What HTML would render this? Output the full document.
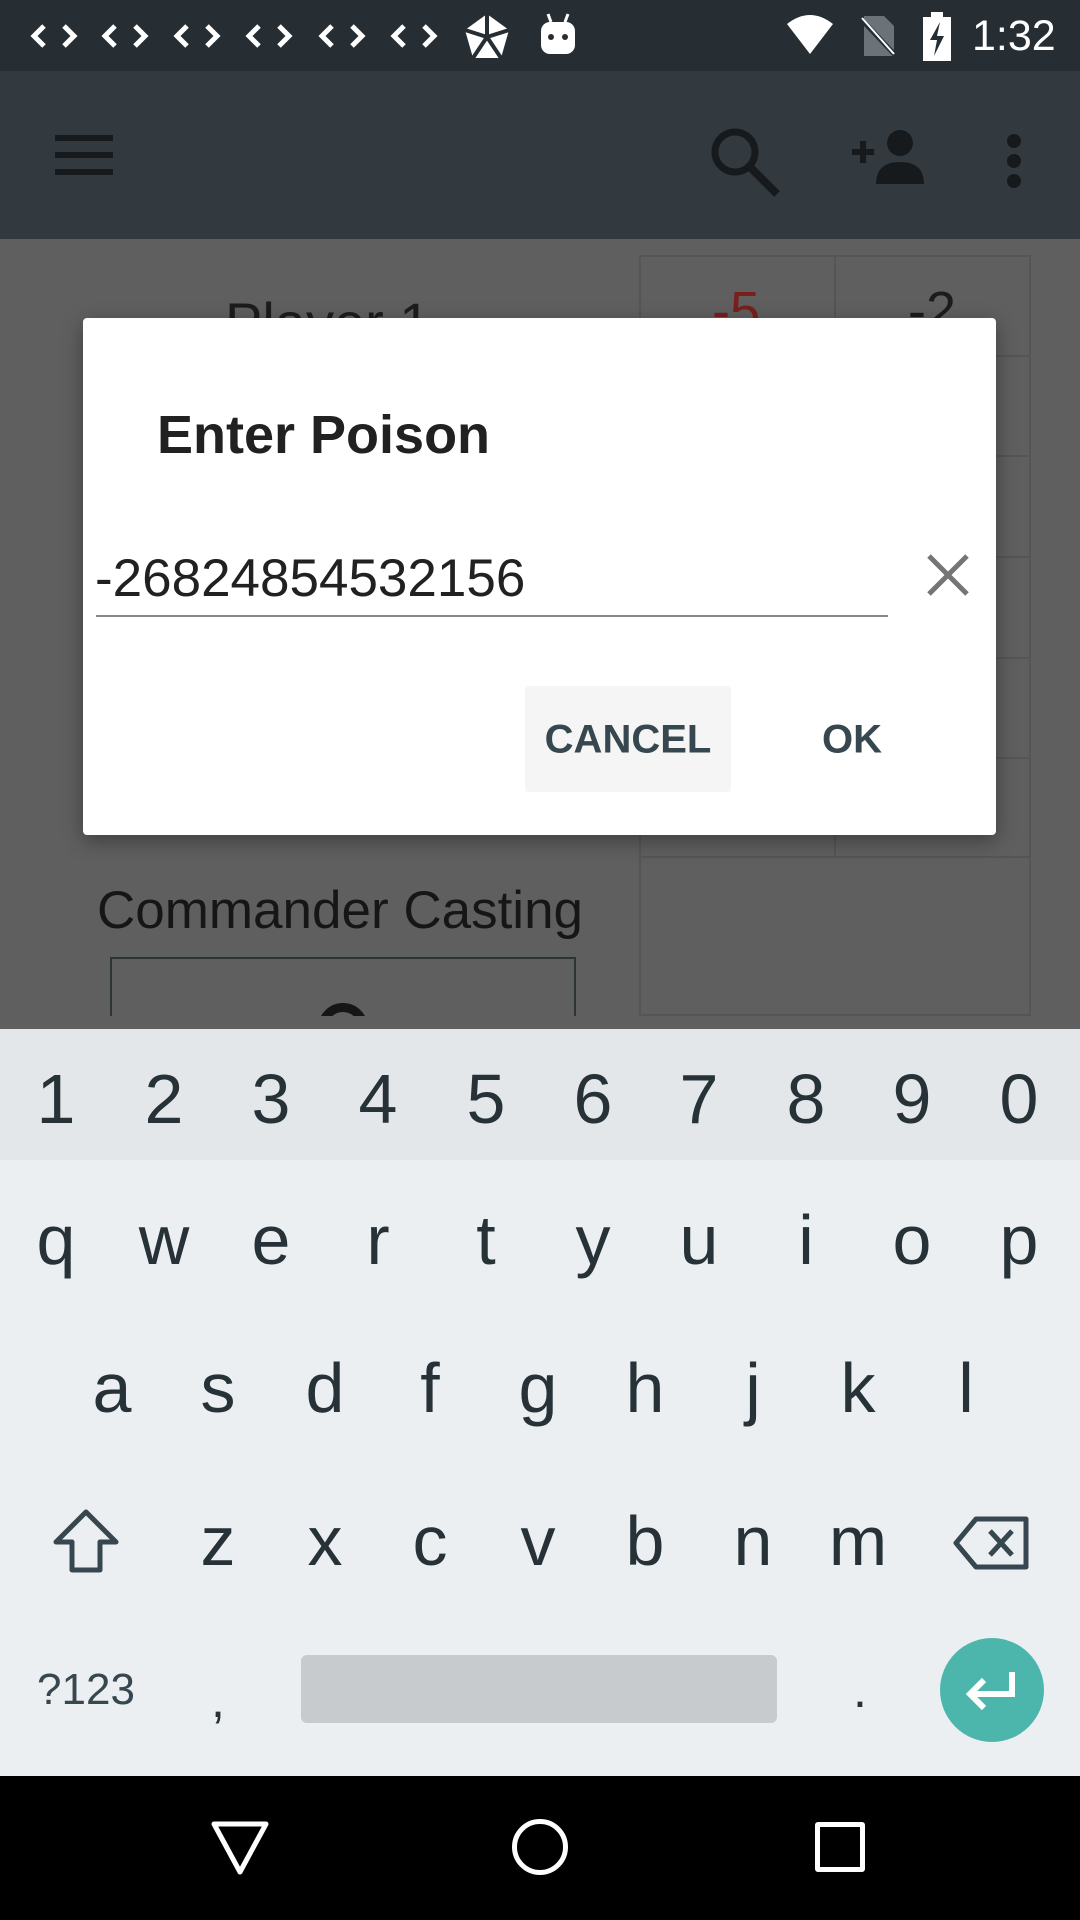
<!DOCTYPE html>
<html><head><meta charset="utf-8"><style>
*{margin:0;padding:0;box-sizing:border-box}
body{width:1080px;height:1920px;position:relative;overflow:hidden;font-family:"Liberation Sans",sans-serif;background:#5f5f5f}
.a{position:absolute}
.k{position:absolute;transform:translate(-50%,-50%);font-size:70px;color:#263238;line-height:1}
</style></head><body>
<!-- status bar -->
<div class="a" style="left:0;top:0;width:1080px;height:71px;background:#262e34"></div>
<svg class="a" style="left:0;top:0" width="520" height="71" viewBox="0 0 520 71">
<g fill="none" stroke="#fff" stroke-width="5">
<path d="M44 26L34 36L44 46M64 26L74 36L64 46"/>
<path d="M115 26L105 36L115 46M135 26L145 36L135 46"/>
<path d="M187 26L177 36L187 46M207 26L217 36L207 46"/>
<path d="M259 26L249 36L259 46M279 26L289 36L279 46"/>
<path d="M332 26L322 36L332 46M352 26L362 36L352 46"/>
<path d="M404 26L394 36L404 46M424 26L434 36L424 46"/>
</g></svg>
<svg class="a" style="left:462px;top:12px" width="50" height="50" viewBox="0 0 50 50"><polygon points="25,2 47,18 39,46 11,46 3,18" fill="#fff"/><path d="M25 2L25 25M47 18L25 25M39 46L25 25M11 46L25 25M3 18L25 25" stroke="#262e34" stroke-width="4"/></svg>
<svg class="a" style="left:538px;top:12px" width="40" height="44" viewBox="0 0 40 44"><rect x="3" y="10" width="34" height="32" rx="9" fill="#fff"/><circle cx="13" cy="25" r="3" fill="#262e34"/><circle cx="27" cy="25" r="3" fill="#262e34"/><path d="M10 2L13 10M30 2L27 10" stroke="#fff" stroke-width="3"/></svg>
<svg class="a" style="left:785px;top:14px" width="50" height="42" viewBox="0 0 50 42"><path d="M2 10Q25-8 48 10L25 40Z" fill="#fff"/></svg>
<svg class="a" style="left:858px;top:14px" width="40" height="44" viewBox="0 0 40 44"><path d="M6 2H26L36 12V42H6Z" fill="#6b7378"/><path d="M2 4L38 42" stroke="#262e34" stroke-width="5"/><path d="M4 4L36 40" stroke="#fff" stroke-width="2"/></svg>
<svg class="a" style="left:921px;top:12px" width="32" height="50" viewBox="0 0 32 50"><rect x="10" y="0" width="12" height="5" fill="#fff"/><rect x="2" y="5" width="28" height="44" fill="#fff"/><path d="M19 10L9 28H16L13 44L23 24H16Z" fill="#262e34"/></svg>
<div class="a" style="left:972px;top:12px;color:#fff;font-size:43px">1:32</div>
<!-- toolbar -->
<div class="a" style="left:0;top:71px;width:1080px;height:168px;background:#323a40"></div>
<div class="a" style="left:55px;top:135px;width:58px;height:6px;background:#161a1d;box-shadow:0 17px 0 #161a1d,0 34px 0 #161a1d"></div>
<svg class="a" style="left:705px;top:122px" width="80" height="80" viewBox="0 0 80 80"><circle cx="30" cy="30" r="20" fill="none" stroke="#161a1d" stroke-width="7"/><path d="M44 44L72 72" stroke="#161a1d" stroke-width="8"/></svg>
<svg class="a" style="left:850px;top:128px" width="80" height="60" viewBox="0 0 80 60"><path d="M2 24H24M13 13V35" stroke="#161a1d" stroke-width="6"/><circle cx="50" cy="15" r="13" fill="#161a1d"/><path d="M26 56Q26 34 50 34Q74 34 74 56Z" fill="#161a1d"/></svg>
<div class="a" style="left:1007px;top:134px;width:14px;height:14px;border-radius:50%;background:#161a1d;box-shadow:0 20px 0 #161a1d,0 40px 0 #161a1d"></div>
<!-- background content -->
<div class="a" style="left:225px;top:290px;font-size:56px;color:#1c1c1c">Player 1</div>
<div class="a" style="left:639px;top:255px;width:392px;height:761px;border:2px solid #555"></div>
<div class="a" style="left:834px;top:255px;width:2px;height:601px;background:#555"></div>
<div class="a" style="left:639px;top:355px;width:392px;height:2px;background:#555;box-shadow:0 100px 0 #555,0 201px 0 #555,0 302px 0 #555,0 402px 0 #555,0 501px 0 #555"></div>
<div class="a" style="left:712px;top:280px;font-size:54px;color:#7a1e1e">-5</div>
<div class="a" style="left:908px;top:280px;font-size:54px;color:#1c1c1c">-2</div>
<div class="a" style="left:97px;top:880px;font-size:53px;color:#161616">Commander Casting</div>
<div class="a" style="left:110px;top:957px;width:466px;height:59px;border:2px solid #2c3438;border-bottom:none;overflow:hidden">
<div class="a" style="left:206px;top:44px;width:50px;height:50px;border:9px solid #161616;border-radius:50%"></div></div>
<!-- dialog -->
<div class="a" style="left:83px;top:318px;width:913px;height:517px;background:#fff;border-radius:4px;box-shadow:0 6px 20px rgba(0,0,0,.35)"></div>
<div class="a" style="left:157px;top:404px;font-size:54px;font-weight:bold;color:#212121">Enter Poison</div>
<div class="a" style="left:95px;top:548px;font-size:53px;color:#212121">-26824854532156</div>
<div class="a" style="left:96px;top:615px;width:792px;height:2px;background:#888"></div>
<svg class="a" style="left:924px;top:551px" width="48" height="48" viewBox="0 0 48 48"><path d="M5 5L43 43M43 5L5 43" stroke="#757575" stroke-width="5"/></svg>
<div class="a" style="left:525px;top:686px;width:206px;height:106px;background:#f5f5f5;border-radius:3px"></div>
<div class="a" style="left:628px;top:740px;transform:translate(-50%,-50%);font-size:40px;font-weight:bold;color:#37474f">CANCEL</div>
<div class="a" style="left:852px;top:740px;transform:translate(-50%,-50%);font-size:40px;font-weight:bold;color:#37474f">OK</div>
<!-- keyboard -->
<div class="a" style="left:0;top:1029px;width:1080px;height:131px;background:#e3e7ea"></div>
<div class="a" style="left:0;top:1160px;width:1080px;height:616px;background:#eceff1"></div>
<div class="k" style="left:56px;top:1099px">1</div><div class="k" style="left:164px;top:1099px">2</div><div class="k" style="left:271px;top:1099px">3</div><div class="k" style="left:378px;top:1099px">4</div><div class="k" style="left:486px;top:1099px">5</div><div class="k" style="left:593px;top:1099px">6</div><div class="k" style="left:699px;top:1099px">7</div><div class="k" style="left:806px;top:1099px">8</div><div class="k" style="left:912px;top:1099px">9</div><div class="k" style="left:1019px;top:1099px">0</div>
<div class="k" style="left:56px;top:1240px">q</div><div class="k" style="left:164px;top:1240px">w</div><div class="k" style="left:271px;top:1240px">e</div><div class="k" style="left:378px;top:1240px">r</div><div class="k" style="left:486px;top:1240px">t</div><div class="k" style="left:593px;top:1240px">y</div><div class="k" style="left:699px;top:1240px">u</div><div class="k" style="left:806px;top:1240px">i</div><div class="k" style="left:912px;top:1240px">o</div><div class="k" style="left:1019px;top:1240px">p</div>
<div class="k" style="left:112px;top:1388px">a</div><div class="k" style="left:218px;top:1388px">s</div><div class="k" style="left:325px;top:1388px">d</div><div class="k" style="left:430px;top:1388px">f</div><div class="k" style="left:538px;top:1388px">g</div><div class="k" style="left:645px;top:1388px">h</div><div class="k" style="left:753px;top:1388px">j</div><div class="k" style="left:858px;top:1388px">k</div><div class="k" style="left:966px;top:1388px">l</div>
<div class="k" style="left:218px;top:1541px">z</div><div class="k" style="left:325px;top:1541px">x</div><div class="k" style="left:430px;top:1541px">c</div><div class="k" style="left:538px;top:1541px">v</div><div class="k" style="left:645px;top:1541px">b</div><div class="k" style="left:753px;top:1541px">n</div><div class="k" style="left:858px;top:1541px">m</div>
<svg class="a" style="left:52px;top:1508px" width="68" height="66" viewBox="0 0 68 66"><path d="M34 4L64 34H48V62H20V34H4Z" fill="none" stroke="#37474f" stroke-width="5" stroke-linejoin="round"/></svg>
<svg class="a" style="left:952px;top:1515px" width="80" height="56" viewBox="0 0 80 56"><path d="M24 4H74V52H24L4 28Z" fill="none" stroke="#37474f" stroke-width="5" stroke-linejoin="round"/><path d="M38 16L60 40M60 16L38 40" stroke="#37474f" stroke-width="5"/></svg>
<div class="k" style="left:86px;top:1690px;font-size:44px;color:#37474f">?123</div>
<div class="k" style="left:218px;top:1700px;font-size:50px">,</div>
<div class="a" style="left:301px;top:1655px;width:476px;height:68px;background:#c8cbce;border-radius:6px"></div>
<div class="k" style="left:860px;top:1690px;font-size:50px">.</div>
<div class="a" style="left:940px;top:1638px;width:104px;height:104px;border-radius:50%;background:#4db6ac"></div>
<svg class="a" style="left:962px;top:1664px" width="60" height="52" viewBox="0 0 60 52"><path d="M50 8V30H10M22 16L8 30L22 44" fill="none" stroke="#fff" stroke-width="6"/></svg>
<!-- nav bar -->
<div class="a" style="left:0;top:1776px;width:1080px;height:144px;background:#000"></div>
<svg class="a" style="left:210px;top:1820px" width="60" height="56" viewBox="0 0 60 56"><path d="M4 4H56L30 52Z" fill="none" stroke="#fff" stroke-width="5" stroke-linejoin="round"/></svg>
<div class="a" style="left:512px;top:1819px;width:56px;height:56px;border:5px solid #fff;border-radius:50%"></div>
<div class="a" style="left:815px;top:1822px;width:50px;height:50px;border:5px solid #fff;border-radius:3px"></div>
</body></html>
